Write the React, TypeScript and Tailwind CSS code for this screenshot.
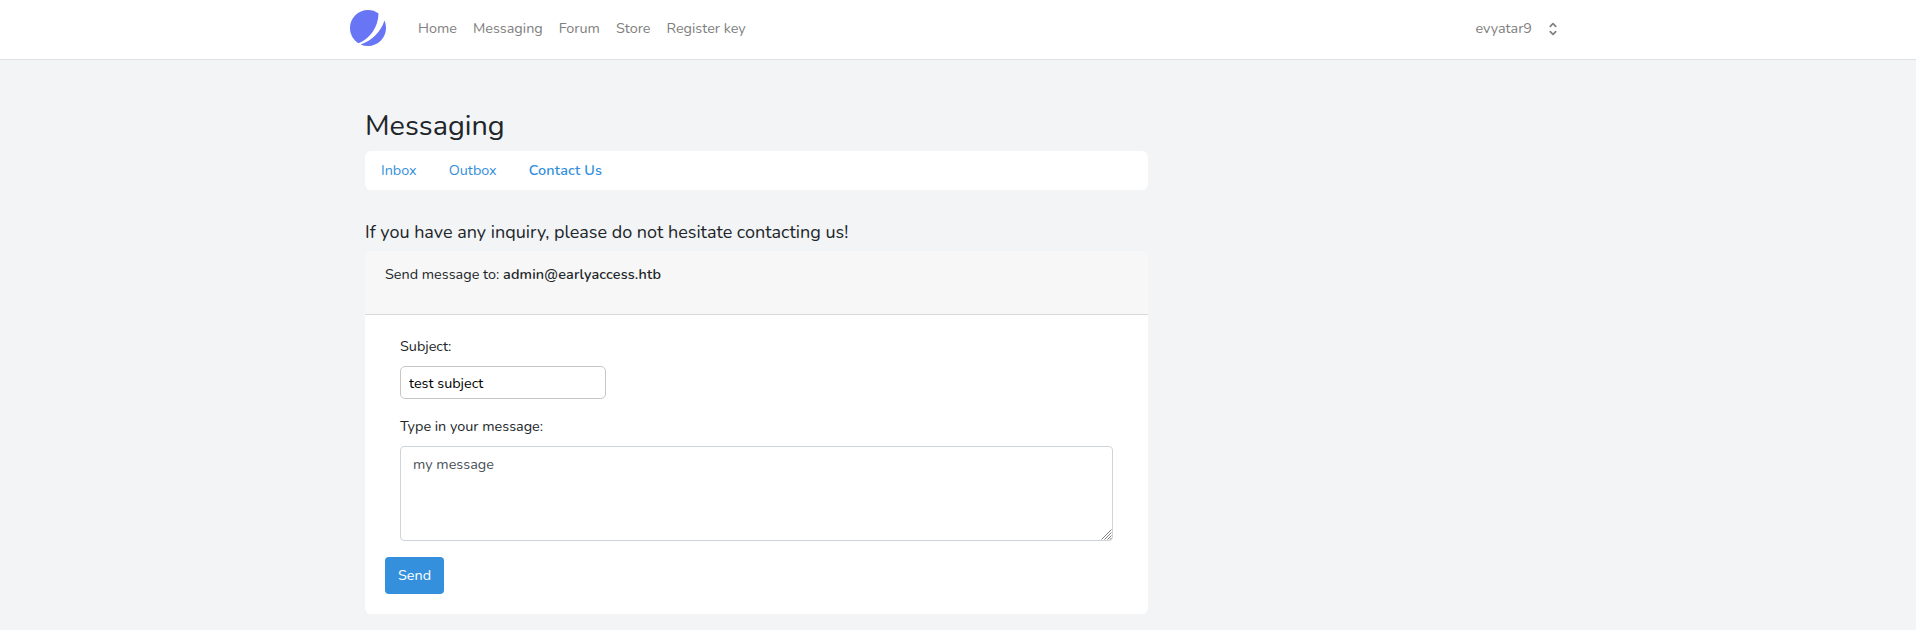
const navLinks = ["Home", "Messaging", "Forum", "Store", "Register key"];

function Logo() {
  return (
    <svg viewBox="0 0 48 48" className="block size-9" aria-hidden="true">
      <path d="M11.395 44.428C4.557 40.198 0 32.632 0 24 0 10.745 10.745 0 24 0a23.891 23.891 0 0113.997 4.502c-.2 17.907-11.097 33.245-26.602 39.926z" fill="#6875F5" />
      <path d="M14.134 45.885A23.914 23.914 0 0024 48c13.255 0 24-10.745 24-24 0-3.516-.756-6.856-2.115-9.866-4.659 15.143-16.608 27.092-31.75 31.751z" fill="#6875F5" />
    </svg>
  );
}

function Navbar() {
  return (
    <nav className="flex h-[60px] items-center border-b border-[#dee2e6] bg-white pr-[358px] pl-[350px] text-[#808080]">
      <div className="-mt-[3px]">
        <Logo />
      </div>
      <div className="-mt-[3px] ml-8 flex gap-4">
        {navLinks.map((label) => (
          <a key={label} href="#" className="block whitespace-nowrap">
            {label}
          </a>
        ))}
      </div>
      <a href="#" className="-mt-[3px] ml-auto flex items-center">
        <span>evyatar9</span>
        <svg viewBox="0 0 20 20" fill="currentColor" className="mt-0.5 -mr-1 ml-3 block size-[18px]" aria-hidden="true">
          <path
            fillRule="evenodd"
            clipRule="evenodd"
            d="M10 3a1 1 0 01.707.293l3 3a1 1 0 01-1.414 1.414L10 5.414 7.707 7.707a1 1 0 01-1.414-1.414l3-3A1 1 0 0110 3zm-3.707 9.293a1 1 0 011.414 0L10 14.586l2.293-2.293a1 1 0 011.414 1.414l-3 3a1 1 0 01-1.414 0l-3-3a1 1 0 010-1.414z"
          />
        </svg>
      </a>
    </nav>
  );
}

export default function App() {
  return (
    <div className="min-h-[630px] bg-[#f2f4f6] font-['Nunito','Lato',sans-serif] text-[14.4px] leading-[23px] text-[#212529]">
      <Navbar />
      <main className="ml-[365px] w-[783px] pt-12">
        <h2 className="h-[43px] text-[28.8px] leading-[36px]">Messaging</h2>
        <div className="flex h-[39px] items-center gap-8 rounded-md bg-white pl-4 text-[#3490dc]">
          <a href="#">Inbox</a>
          <a href="#">Outbox</a>
          <a href="#" className="font-semibold tracking-[0.15px]">Contact Us</a>
        </div>
        <h5 className="mt-[31px] h-[30px] whitespace-nowrap text-[18px] leading-[22px]">
          If you have any inquiry, please do not hesitate contacting us!
        </h5>
        <section className="h-[363px] overflow-hidden rounded-md bg-white">
          <header className="h-[64px] border-b border-[#d8d9da] bg-[#f7f7f7] px-5 pt-3">
            Send message to: <strong className="font-semibold tracking-[0.17px]">admin@earlyaccess.htb</strong>
          </header>
          <div className="px-[35px] pt-5">
            <label htmlFor="subject" className="block h-[31px]">Subject:</label>
            <input
              id="subject"
              defaultValue="test subject"
              className="block h-[33px] w-[206px] rounded-[5px] border border-[#c9c5c5] bg-white px-2 text-black outline-none"
            />
            <label htmlFor="message" className="mt-4 block h-[31px]">Type in your message:</label>
            <div className="relative w-[713px]">
              <textarea
                id="message"
                defaultValue="my message"
                className="block h-[95px] w-full resize-none rounded border border-[#ced4da] bg-white px-3 py-1.5 text-[#495057] outline-none"
              />
              <svg viewBox="0 0 11 11" className="absolute right-px bottom-px size-[11px]" stroke="#6f6f6f" strokeWidth="0.9" aria-hidden="true">
                <path d="M0.5 10.5l10-10M3.5 10.5l7-7M6.5 10.5l4-4M9 10.5l1.5-1.5" />
              </svg>
            </div>
          </div>
          <button className="mt-4 ml-5 block h-[37px] w-[59px] rounded bg-[#3490dc] text-white">Send</button>
        </section>
      </main>
    </div>
  );
}
